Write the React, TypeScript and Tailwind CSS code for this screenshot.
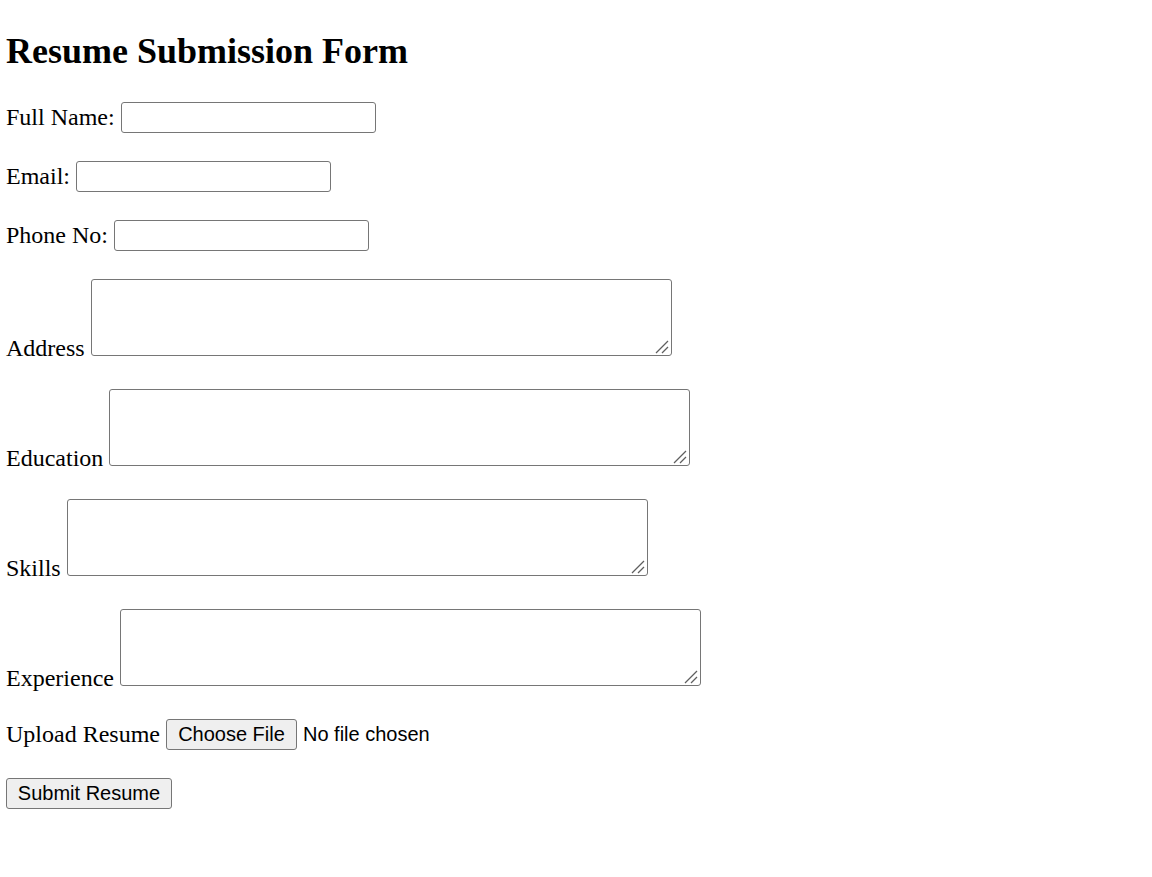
import React from "react";

function Handle() {
  return (
    <svg
      className="absolute pointer-events-none"
      style={{ right: 1, bottom: 1 }}
      width="16"
      height="16"
      viewBox="0 0 16 16"
    >
      <line x1="1" y1="14" x2="13" y2="2" stroke="#5f5f5f" strokeWidth="1.3" />
      <line x1="7" y1="14" x2="13" y2="8" stroke="#5f5f5f" strokeWidth="1.3" />
    </svg>
  );
}

function InputRow({ label }: { label: string }) {
  return (
    <div className="flex items-center gap-[6px] h-[31px]">
      <span className="leading-normal mb-[2px]">{label}</span>
      <input
        type="text"
        className="w-[255px] h-[31px] border border-[#767676] rounded-[3px] bg-white"
      />
    </div>
  );
}

function AreaRow({ label }: { label: string }) {
  return (
    <div className="flex items-end gap-[6px]">
      <span className="leading-[16px]">{label}</span>
      <div className="relative w-[581px] h-[77px]">
        <textarea className="block w-full h-full border border-[#767676] rounded-[3px] bg-white resize-none" />
        <Handle />
      </div>
    </div>
  );
}

export default function App() {
  return (
    <div
      className="min-h-[877px] bg-white text-black px-[6px] pt-[24px] text-[24px]"
      style={{ fontFamily: '"Liberation Serif", "Times New Roman", serif' }}
    >
      <h1 className="text-[36px] font-bold leading-normal">Resume Submission Form</h1>
      <div className="mt-[24px] flex flex-col">
        <InputRow label="Full Name:" />
        <div className="h-[28px]" />
        <InputRow label="Email:" />
        <div className="h-[28px]" />
        <InputRow label="Phone No:" />
        <div className="h-[28px]" />
        <AreaRow label="Address" />
        <div className="h-[33px]" />
        <AreaRow label="Education" />
        <div className="h-[33px]" />
        <AreaRow label="Skills" />
        <div className="h-[33px]" />
        <AreaRow label="Experience" />
        <div className="h-[33px]" />
        <div className="flex items-center h-[31px]">
          <span className="leading-normal mr-[6px] mb-[2px]">Upload Resume</span>
          <button
            type="button"
            className="w-[131px] h-[31px] pb-[2px] border border-[#767676] rounded-[3px] bg-[#efefef] text-[20px] leading-none"
            style={{ fontFamily: '"Liberation Sans", Arial, sans-serif' }}
          >
            Choose File
          </button>
          <span
            className="ml-[6px] mb-[2px] text-[20px]"
            style={{ fontFamily: '"Liberation Sans", Arial, sans-serif' }}
          >
            No file chosen
          </span>
        </div>
        <div className="h-[28px]" />
        <div className="flex h-[31px]">
          <button
            type="button"
            className="w-[166px] h-[31px] pb-[2px] border border-[#767676] rounded-[3px] bg-[#efefef] text-[20px] leading-none"
            style={{ fontFamily: '"Liberation Sans", Arial, sans-serif' }}
          >
            Submit Resume
          </button>
        </div>
      </div>
    </div>
  );
}
